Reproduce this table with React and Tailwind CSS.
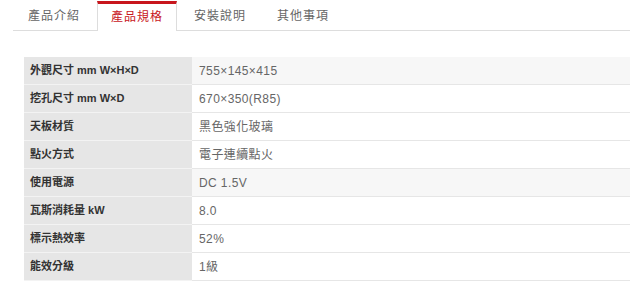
const tabs = ["產品介紹", "產品規格", "安裝說明", "其他事項"];

const specs = [
    { label: "外觀尺寸 mm W×H×D", value: "755×145×415", shade: true },
    { label: "挖孔尺寸 mm W×D", value: "670×350(R85)" },
    { label: "天板材質", value: "黑色強化玻璃" },
    { label: "點火方式", value: "電子連續點火" },
    { label: "使用電源", value: "DC 1.5V", shade: true },
    { label: "瓦斯消耗量 kW", value: "8.0" },
    { label: "標示熱效率", value: "52%" },
    { label: "能效分級", value: "1級" },
];

const App = () => {
    return (
        <div className="w-[630px] h-[303px] bg-white overflow-hidden font-['Liberation_Sans','Noto_Sans_CJK_TC',sans-serif]">
            {/* Tabs */}
            <div className="ml-[13px] mt-[1px] h-[30px] pl-[1px] flex gap-[3px] border-b border-[#dddddd]">
                {tabs.map((tab, i) =>
                    i === 1 ? (
                        <div
                            key={tab}
                            className="w-[80px] h-[30px] -mb-[1px] pb-[2px] flex items-center justify-center bg-white border-t-[3px] border-t-[#c8161d] border-x border-x-[#dddddd] text-[12px] tracking-[1px] text-[#c8161d]"
                        >
                            {tab}
                        </div>
                    ) : (
                        <div
                            key={tab}
                            className="w-[80px] h-[29px] flex items-center justify-center text-[12px] tracking-[1px] text-[#666666]"
                        >
                            {tab}
                        </div>
                    )
                )}
            </div>

            {/* Spec table */}
            <div className="ml-[24px] mt-[26px]">
                {specs.map((row) => (
                    <div key={row.label} className="flex h-[28px]">
                        <div className="w-[168px] shrink-0 pl-[6px] flex items-center bg-[#e6e6e6] border-b border-[#f3f3f3] text-[11px] font-bold text-[#333333]">
                            {row.label}
                        </div>
                        <div
                            className={`flex-1 pl-[7px] flex items-center border-b border-[#e6e6e6] text-[12px] tracking-[0.4px] text-[#666666] ${row.shade ? "bg-[#f7f7f7]" : "bg-white"}`}
                        >
                            {row.value}
                        </div>
                    </div>
                ))}
            </div>
        </div>
    );
};

export default App;
